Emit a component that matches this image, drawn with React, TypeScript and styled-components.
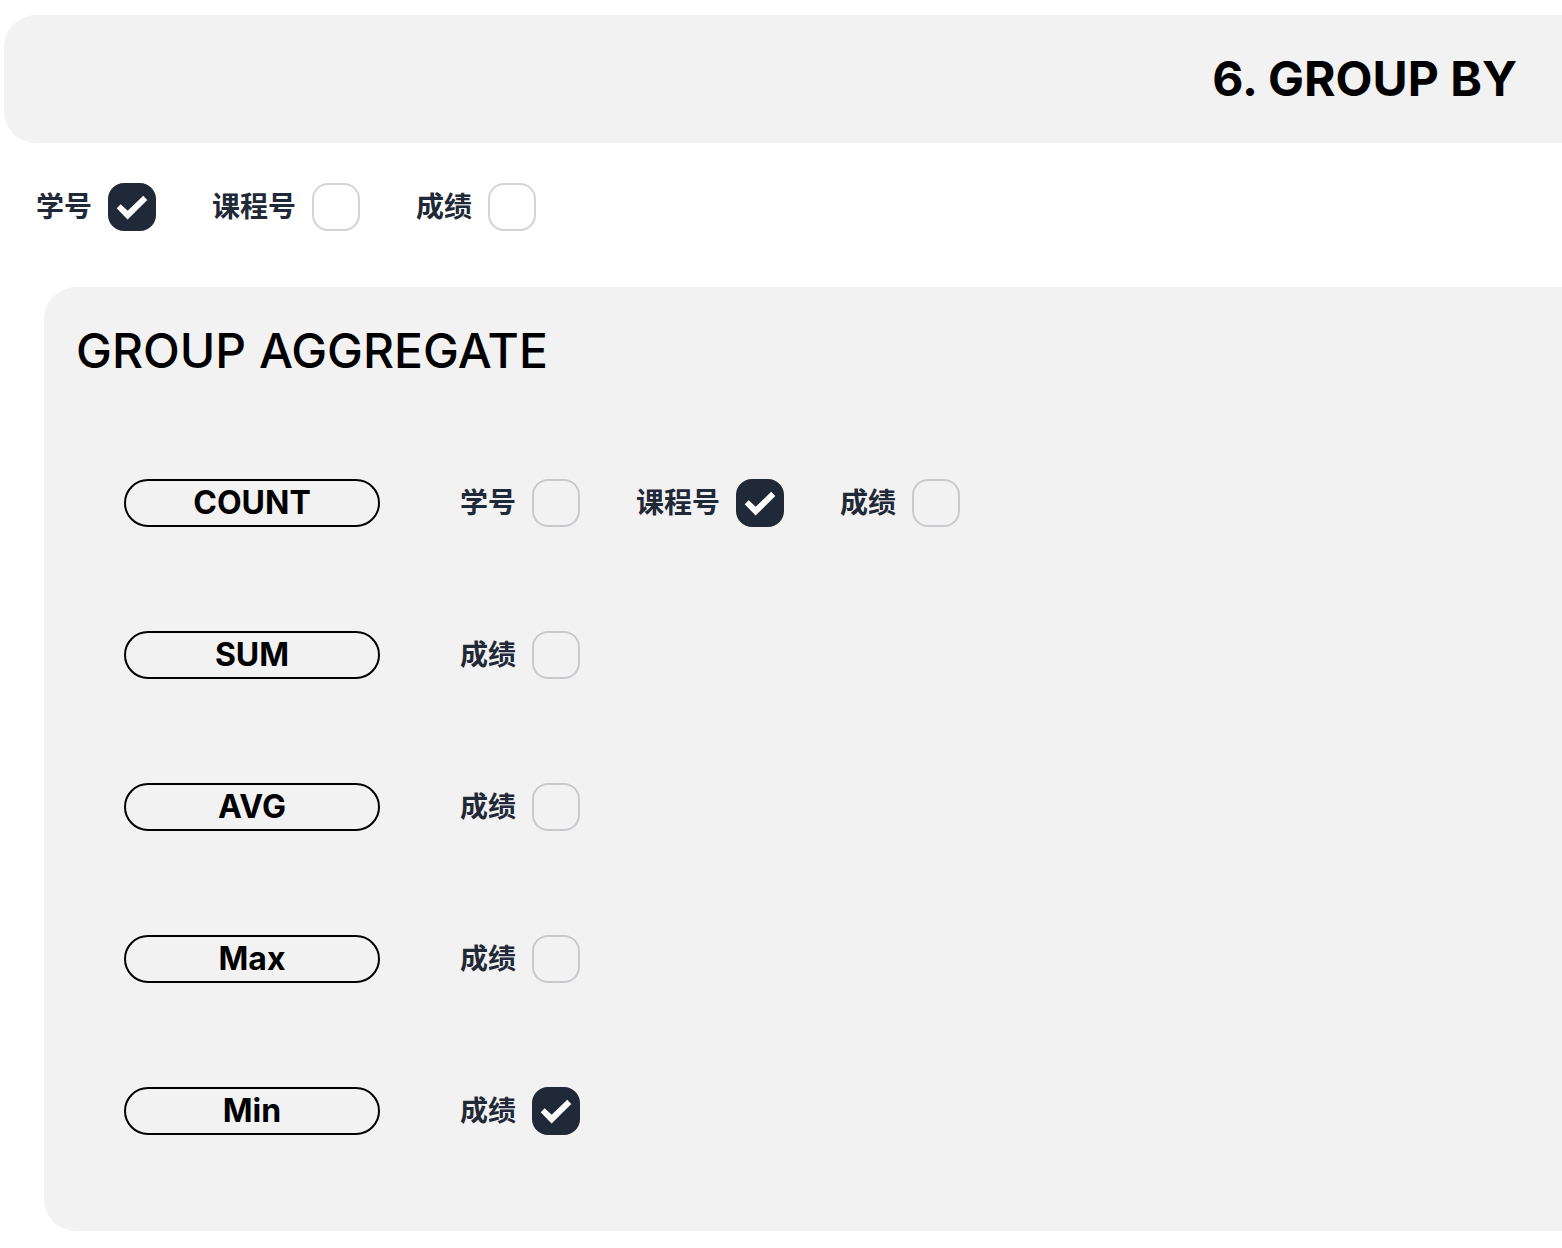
import React, { useState } from 'react';
import styled, { createGlobalStyle } from 'styled-components';

const GlobalStyle = createGlobalStyle`
  *, *::before, *::after { box-sizing: border-box; }
  body {
    margin: 0;
    background: #ffffff;
    color: #000000;
    font-family: Inter, "Noto Sans CJK SC", sans-serif;
    overflow-x: hidden;
  }
`;

const Page = styled.main`
  padding: 15px 0 17px 4px;
`;

const Banner = styled.header`
  display: flex;
  justify-content: flex-end;
  align-items: center;
  padding: 32px 45px 32px 32px;
  background: #f2f2f2;
  border-radius: 32px 0 0 32px;
`;

const BannerTitle = styled.h1`
  margin: 0;
  font-size: 48px;
  line-height: 64px;
  font-weight: 680;
`;

const GroupBy = styled.section`
  padding: 32px 24px;
`;

const Panel = styled.section`
  margin: 16px 0 0 40px;
  padding: 32px 32px 44px;
  background: #f2f2f2;
  border-radius: 32px 0 0 32px;
`;

const PanelTitle = styled.h2`
  margin: 0 0 44px;
  font-size: 48px;
  line-height: 64px;
  font-weight: 450;
`;

const AggregateRow = styled.div`
  display: flex;
  align-items: center;
  gap: 72px;
  padding: 44px 48px;
`;

const AggregateName = styled.div`
  width: 256px;
  height: 48px;
  border: 2px solid #000000;
  border-radius: 24px;
  font-size: 32px;
  line-height: 44px;
  font-weight: 680;
  text-align: center;
`;

const Fields = styled.div`
  display: flex;
  flex-wrap: wrap;
  gap: 40px;
`;

const Field = styled.label`
  display: flex;
  align-items: center;
  gap: 16px;
  padding: 8px;
  cursor: pointer;
`;

const FieldName = styled.span`
  color: #1f2937;
  font-size: 28px;
  line-height: 40px;
  font-weight: 700;
`;

const CheckFrame = styled.span`
  display: grid;
  width: 48px;
  height: 48px;

  & > * { grid-area: 1 / 1; }
`;

const CheckInput = styled.input`
  appearance: none;
  width: 48px;
  height: 48px;
  margin: 0;
  border: 2px solid rgba(31, 41, 55, 0.2);
  border-radius: 16px;
  cursor: pointer;

  &:checked {
    background: #1f2937;
    border-color: #1f2937;
  }
`;

const CheckMark = styled.svg`
  width: 48px;
  height: 48px;
  pointer-events: none;
`;

interface CheckFieldProps {
  name: string;
  initial?: boolean;
}

function CheckField({ name, initial = false }: CheckFieldProps) {
  const [checked, setChecked] = useState(initial);
  return (
    <Field>
      <FieldName>{name}</FieldName>
      <CheckFrame>
        <CheckInput type="checkbox" checked={checked} onChange={(e) => setChecked(e.target.checked)} />
        {checked && (
          <CheckMark viewBox="0 0 48 48" aria-hidden="true">
            <path d="M8.7 25.2 L12.7 21.2 L19.7 27.8 L35.2 12.8 L39.3 17 L19.6 36.6 Z" fill="#ffffff" />
          </CheckMark>
        )}
      </CheckFrame>
    </Field>
  );
}

const groupFields: CheckFieldProps[] = [
  { name: '学号', initial: true },
  { name: '课程号' },
  { name: '成绩' },
];

const aggregates: { name: string; fields: CheckFieldProps[] }[] = [
  { name: 'COUNT', fields: [{ name: '学号' }, { name: '课程号', initial: true }, { name: '成绩' }] },
  { name: 'SUM', fields: [{ name: '成绩' }] },
  { name: 'AVG', fields: [{ name: '成绩' }] },
  { name: 'Max', fields: [{ name: '成绩' }] },
  { name: 'Min', fields: [{ name: '成绩', initial: true }] },
];

export default function App() {
  return (
    <>
      <GlobalStyle />
      <Page>
        <Banner>
          <BannerTitle>6. GROUP BY</BannerTitle>
        </Banner>
        <GroupBy>
          <Fields>
            {groupFields.map((field) => (
              <CheckField key={field.name} {...field} />
            ))}
          </Fields>
        </GroupBy>
        <Panel>
          <PanelTitle>GROUP AGGREGATE</PanelTitle>
          {aggregates.map((aggregate) => (
            <AggregateRow key={aggregate.name}>
              <AggregateName>{aggregate.name}</AggregateName>
              <Fields>
                {aggregate.fields.map((field) => (
                  <CheckField key={field.name} {...field} />
                ))}
              </Fields>
            </AggregateRow>
          ))}
        </Panel>
      </Page>
    </>
  );
}
